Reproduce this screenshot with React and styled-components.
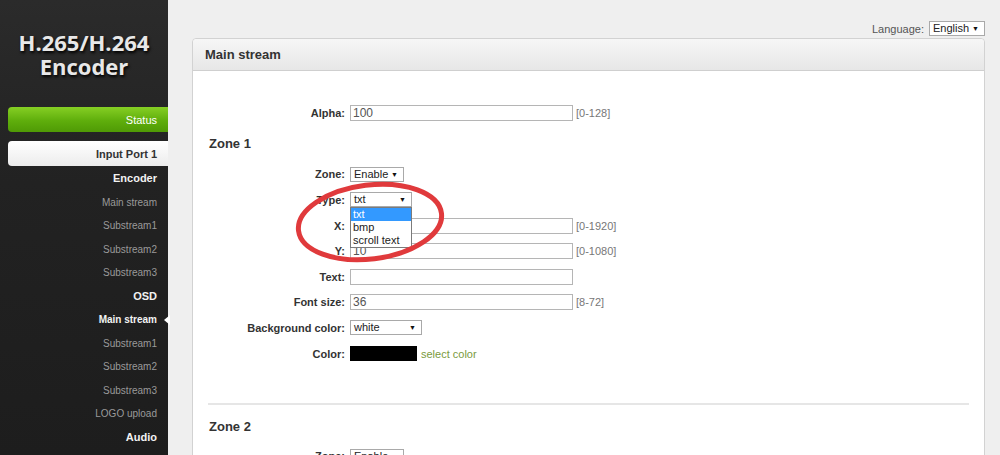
import React from "react";
import styled, { createGlobalStyle } from "styled-components";

const Global = createGlobalStyle`
  html, body {
    margin: 0;
    height: 100%;
    overflow: hidden;
    background: #efefef;
    font-family: "Liberation Sans", Arial, sans-serif;
  }
`;

const Page = styled.div`
  position: relative;
  display: flex;
  height: 455px;
  overflow: hidden;
`;

const Sidebar = styled.aside`
  width: 168px;
  flex-shrink: 0;
  background: linear-gradient(180deg, #2b2b2b 0%, #222 40%, #1d1d1d 100%);
  display: flex;
  flex-direction: column;
`;

const Brand = styled.h1`
  margin: 30px 0 29px;
  font-family: "Open Sans", "DejaVu Sans", sans-serif;
  font-size: 22px;
  line-height: 24px;
  font-weight: 700;
  text-align: center;
  color: #e8e8e8;
  text-shadow: 1px 2px 3px #000;
`;

const NavButton = styled.div`
  margin-left: 8px;
  height: 25px;
  padding-right: 11px;
  display: flex;
  align-items: center;
  justify-content: flex-end;
  font-size: 11px;
  border-radius: 4px 0 0 4px;
  ${(p) =>
    p.$green
      ? `background: linear-gradient(180deg, #86cf24 0%, #5fae0c 55%, #4f9a05 100%);
         color: #fff;
         margin-bottom: 9px;`
      : `background: linear-gradient(180deg, #ffffff 0%, #ececec 100%);
         color: #333;
         font-weight: 700;`}
`;

const NavList = styled.ul`
  list-style: none;
  margin: 1px 0 0;
  padding: 0;
`;

const NavItem = styled.li`
  position: relative;
  height: 23.5px;
  line-height: 23.5px;
  padding-right: 11px;
  text-align: right;
  font-size: ${(p) => (p.$head ? "11px" : "10px")};
  font-weight: ${(p) => (p.$head || p.$active ? 700 : 400)};
  color: ${(p) => (p.$head || p.$active ? "#f2f2f2" : "#9a9a9a")};

  ${(p) =>
    p.$active &&
    `&::after {
      content: "";
      position: absolute;
      right: -2px;
      top: 7px;
      border-style: solid;
      border-width: 5px 6px 5px 0;
      border-color: transparent #fff transparent transparent;
    }`}
`;

const Main = styled.main`
  flex: 1;
  padding: 0 15px 0 24px;
  min-width: 0;
`;

const LangBar = styled.div`
  height: 38px;
  box-sizing: border-box;
  padding-top: 21px;
  display: flex;
  justify-content: flex-end;
  align-items: flex-start;
  gap: 5px;
  font-size: 11px;
  color: #555;
  span {
    line-height: 15px;
    margin-top: 1px;
  }
`;

const Panel = styled.section`
  background: #fff;
  border: 1px solid #d2d2d2;
  border-radius: 4px 4px 0 0;
  height: 600px;
`;

const PanelHeader = styled.div`
  height: 31px;
  line-height: 31px;
  padding-left: 12px;
  border-bottom: 1px solid #cfcfcf;
  border-radius: 4px 4px 0 0;
  background: linear-gradient(180deg, #f6f6f6 0%, #e7e7e7 100%);
  font-size: 13px;
  font-weight: 700;
  color: #333;
`;

const PanelBody = styled.div`
  position: relative;
  padding: 29px 15px 0 16px;
`;

const Row = styled.div`
  position: relative;
  display: flex;
  align-items: center;
  height: 25.6px;
`;

const Label = styled.label`
  width: 136px;
  margin-right: 5px;
  text-align: right;
  font-size: 11px;
  font-weight: 700;
  color: #333;
`;

const Input = styled.div`
  width: 219px;
  height: 14px;
  border: 1px solid #b5b5b5;
  padding-left: 2px;
  font-size: 12px;
  line-height: 14px;
  color: #555;
  background: #fff;
`;

const Range = styled.span`
  margin-left: 3px;
  font-size: 11px;
  color: #777;
`;

const Select = styled.div`
  position: relative;
  width: ${(p) => p.$w}px;
  box-sizing: border-box;
  height: 15px;
  border: 1px solid #a9a9a9;
  padding-left: 3px;
  font-size: 11px;
  line-height: 13px;
  color: #222;
  background: #fff;

  &::after {
    content: "▼";
    position: absolute;
    right: 5px;
    top: 0;
    font-size: 7px;
    color: #111;
  }
`;

const Options = styled.ul`
  position: absolute;
  left: 141px;
  top: 20px;
  width: 62px;
  box-sizing: border-box;
  margin: 0;
  padding: 0;
  list-style: none;
  background: #fff;
  border: 1px solid #7b7b7b;
  font-size: 11px;
  z-index: 2;
`;

const Option = styled.li`
  height: 13px;
  line-height: 13px;
  padding-left: 2px;
  color: ${(p) => (p.$sel ? "#fff" : "#222")};
  background: ${(p) => (p.$sel ? "#3399ff" : "#fff")};
`;

const Swatch = styled.div`
  width: 67px;
  height: 15px;
  background: #000;
`;

const ColorLink = styled.span`
  margin-left: 4px;
  font-size: 11px;
  color: #7a9a3c;
`;

const ZoneTitle = styled.h3`
  margin: 0;
  height: ${(p) => (p.$compact ? "32px" : "36px")};
  line-height: ${(p) => (p.$compact ? "32px" : "36px")};
  font-size: 13px;
  font-weight: 700;
  color: #333;
`;

const Divider = styled.hr`
  margin: 37px 0 6px -1px;
  border: 0;
  border-top: 2px solid #e6e6e6;
`;

const Marker = styled.svg`
  position: absolute;
  left: 288px;
  top: 176px;
  pointer-events: none;
  z-index: 3;
`;

const subs = ["Main stream", "Substream1", "Substream2", "Substream3"];

export default function App() {
  return (
    <Page>
      <Global />
      <Sidebar>
        <Brand>
          H.265/H.264
          <br />
          Encoder
        </Brand>
        <NavButton $green>Status</NavButton>
        <NavButton>Input Port 1</NavButton>
        <NavList>
          <NavItem $head>Encoder</NavItem>
          {subs.map((s) => (
            <NavItem key={"e" + s}>{s}</NavItem>
          ))}
          <NavItem $head>OSD</NavItem>
          {subs.map((s, i) => (
            <NavItem key={"o" + s} $active={i === 0}>
              {s}
            </NavItem>
          ))}
          <NavItem>LOGO upload</NavItem>
          <NavItem $head>Audio</NavItem>
        </NavList>
      </Sidebar>

      <Main>
        <LangBar>
          <span>Language:</span>
          <Select $w={56}>English</Select>
        </LangBar>
        <Panel>
          <PanelHeader>Main stream</PanelHeader>
          <PanelBody>
            <Row>
              <Label>Alpha:</Label>
              <Input>100</Input>
              <Range>[0-128]</Range>
            </Row>

            <ZoneTitle>Zone 1</ZoneTitle>
            <Row>
              <Label>Zone:</Label>
              <Select $w={54}>Enable</Select>
            </Row>
            <Row>
              <Label>Type:</Label>
              <Select $w={62}>txt</Select>
              <Options>
                <Option $sel>txt</Option>
                <Option>bmp</Option>
                <Option>scroll text</Option>
              </Options>
            </Row>
            <Row>
              <Label>X:</Label>
              <Input>10</Input>
              <Range>[0-1920]</Range>
            </Row>
            <Row>
              <Label>Y:</Label>
              <Input>10</Input>
              <Range>[0-1080]</Range>
            </Row>
            <Row>
              <Label>Text:</Label>
              <Input />
            </Row>
            <Row>
              <Label>Font size:</Label>
              <Input>36</Input>
              <Range>[8-72]</Range>
            </Row>
            <Row>
              <Label>Background color:</Label>
              <Select $w={72}>white</Select>
            </Row>
            <Row>
              <Label>Color:</Label>
              <Swatch />
              <ColorLink>select color</ColorLink>
            </Row>

            <Divider />
            <ZoneTitle $compact>Zone 2</ZoneTitle>
            <Row>
              <Label>Zone:</Label>
              <Select $w={54}>Enable</Select>
            </Row>
          </PanelBody>
        </Panel>
      </Main>

      <Marker width="170" height="100" viewBox="0 0 170 100">
        <ellipse
          cx="82"
          cy="46"
          rx="72"
          ry="37"
          transform="rotate(-7 82 46)"
          fill="none"
          stroke="#e03a3c"
          strokeWidth="5"
        />
      </Marker>
    </Page>
  );
}
